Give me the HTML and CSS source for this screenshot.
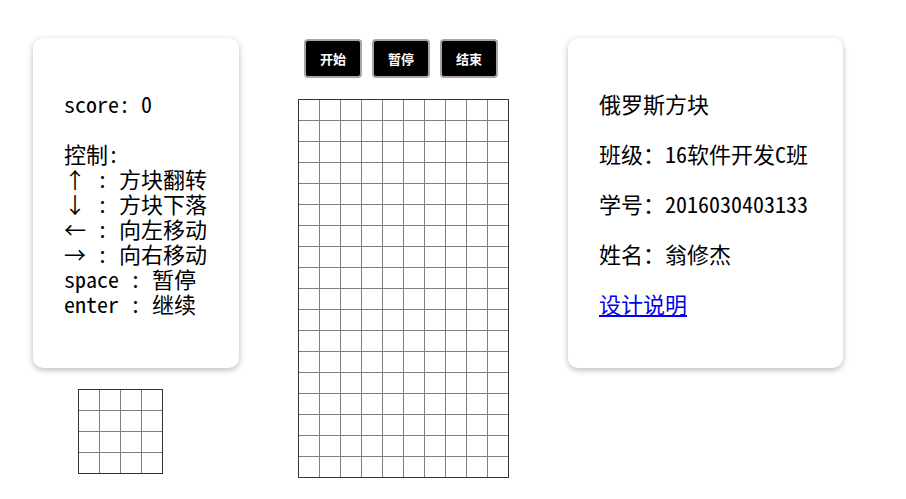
FILE: index.html
```html
<!DOCTYPE html>
<html lang="zh-CN">
<head>
<meta charset="utf-8">
<title>俄罗斯方块</title>
<link rel="stylesheet" href="styles.css">
</head>
<body>
<div class="page">
  <div class="col-left">
    <div class="card card-left">
      <p class="line">score: 0</p>
      <div class="controls">
        <div class="line">控制:</div>
        <div class="line">↑ : 方块翻转</div>
        <div class="line">↓ : 方块下落</div>
        <div class="line">← : 向左移动</div>
        <div class="line">→ : 向右移动</div>
        <div class="line">space : 暂停</div>
        <div class="line">enter : 继续</div>
      </div>
    </div>
    <div class="preview"></div>
  </div>
  <div class="col-mid">
    <div class="btns">
      <button class="btn">开始</button>
      <button class="btn">暂停</button>
      <button class="btn">结束</button>
    </div>
    <div class="board"></div>
  </div>
  <div class="card card-right">
    <p class="info">俄罗斯方块</p>
    <p class="info">班级：16软件开发C班</p>
    <p class="info">学号：2016030403133</p>
    <p class="info">姓名：翁修杰</p>
    <p class="info"><a href="#" class="link">设计说明</a></p>
  </div>
</div>
</body>
</html>
```

FILE: styles.css
```css
* { box-sizing: border-box; }
html, body { margin: 0; padding: 0; background: #fff; }
body {
  font-family: "Noto Sans Mono CJK SC", "Noto Sans CJK SC", monospace;
  font-size: 22px;
  line-height: 25px;
  color: #000;
}
.page {
  display: flex;
  align-items: flex-start;
  gap: 59px;
  padding: 38px 0 0 33px;
}
.col-left {
  display: flex;
  flex-direction: column;
  width: 206px;
}
.card {
  background: #fff;
  border-radius: 10px;
  box-shadow: 0 2px 6px rgba(0, 0, 0, 0.28);
  height: 330px;
  padding: 53px 0 0 31px;
  white-space: nowrap;
}
.card-left { width: 206px; }
.card-right { width: 275px; }
.line, .info { margin: 0; height: 25px; }
.controls { margin-top: 25px; }
.info + .info { margin-top: 25px; }
.link { color: #0000ee; text-decoration: underline; }

.preview {
  margin: 21px 0 0 45px;
  width: 85px;
  height: 85px;
  border: 1px solid #333;
  background-image:
    linear-gradient(to right, #7f7f7f 1px, transparent 1px),
    linear-gradient(to bottom, #7f7f7f 1px, transparent 1px);
  background-size: 21px 21px;
  background-position: -1px -1px;
}
.col-mid {
  display: flex;
  flex-direction: column;
  width: 211px;
  padding-top: 1px;
}
.btns {
  display: flex;
  gap: 10px;
  padding-left: 6px;
}
.btn {
  width: 58px;
  height: 39px;
  padding: 0;
  background: #000;
  color: #fff;
  border: 2px solid #a6a6a6;
  border-radius: 4px;
  font-family: "Noto Sans CJK SC", sans-serif;
  font-weight: bold;
  font-size: 13px;
  line-height: 1;
}
.board {
  margin-top: 21px;
  width: 211px;
  height: 379px;
  border: 1px solid #333;
  background-image:
    linear-gradient(to right, #7f7f7f 1px, transparent 1px),
    linear-gradient(to bottom, #7f7f7f 1px, transparent 1px);
  background-size: 21px 21px;
  background-position: -1px -1px;
}
```
